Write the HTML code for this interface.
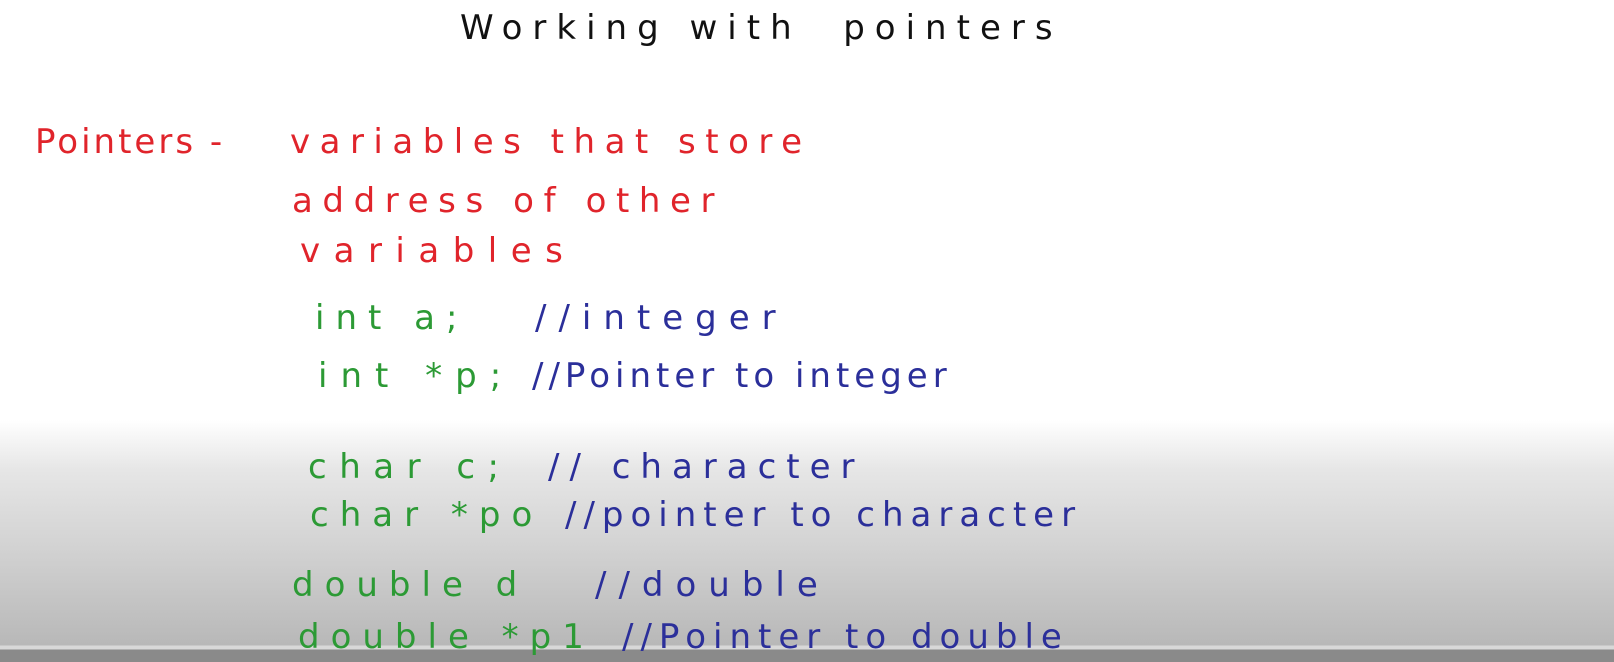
<!DOCTYPE html>
<html><head><style>
body{margin:0;width:1614px;height:662px;overflow:hidden;position:relative;font-family:"DejaVu Sans","Liberation Sans",sans-serif;
background:linear-gradient(to bottom,#fff 0,#fff 420px,#e6e6e6 470px,#cfcfcf 560px,#b8b8b8 645px,#d8d8d8 646px,#d8d8d8 649px,#8a8a8a 650px,#8a8a8a 662px);}
.t{position:absolute;white-space:nowrap;font-size:34px;line-height:1}
.k{color:#111}.r{color:#e0242b}.g{color:#2c9a35}.b{color:#2b2f9a}
</style></head><body>
<div class="t k" style="left:460px;top:11px;letter-spacing:10px">Working with &nbsp;pointers</div>
<div class="t r" style="left:35px;top:125px;letter-spacing:3px">Pointers -</div>
<div class="t r" style="left:290px;top:125px;letter-spacing:9.5px">variables that store</div>
<div class="t r" style="left:292px;top:184px;letter-spacing:9.6px">address of other</div>
<div class="t r" style="left:300px;top:234px;letter-spacing:13.5px">variables</div>
<div class="t g" style="left:315px;top:301px;letter-spacing:11px">int a;</div>
<div class="t b" style="left:535px;top:301px;letter-spacing:12px">//integer</div>
<div class="t g" style="left:318px;top:359px;letter-spacing:13px">int *p;</div>
<div class="t b" style="left:532px;top:359px;letter-spacing:5px">//Pointer to integer</div>
<div class="t g" style="left:308px;top:450px;letter-spacing:12.5px">char c;</div>
<div class="t b" style="left:548px;top:450px;letter-spacing:10px">// character</div>
<div class="t g" style="left:310px;top:498px;letter-spacing:11px">char *po</div>
<div class="t b" style="left:565px;top:498px;letter-spacing:7px">//pointer to character</div>
<div class="t g" style="left:292px;top:568px;letter-spacing:11px">double d</div>
<div class="t b" style="left:595px;top:568px;letter-spacing:12px">//double</div>
<div class="t g" style="left:298px;top:620px;letter-spacing:11px">double *p1</div>
<div class="t b" style="left:622px;top:620px;letter-spacing:7px">//Pointer to double</div>
</body></html>
